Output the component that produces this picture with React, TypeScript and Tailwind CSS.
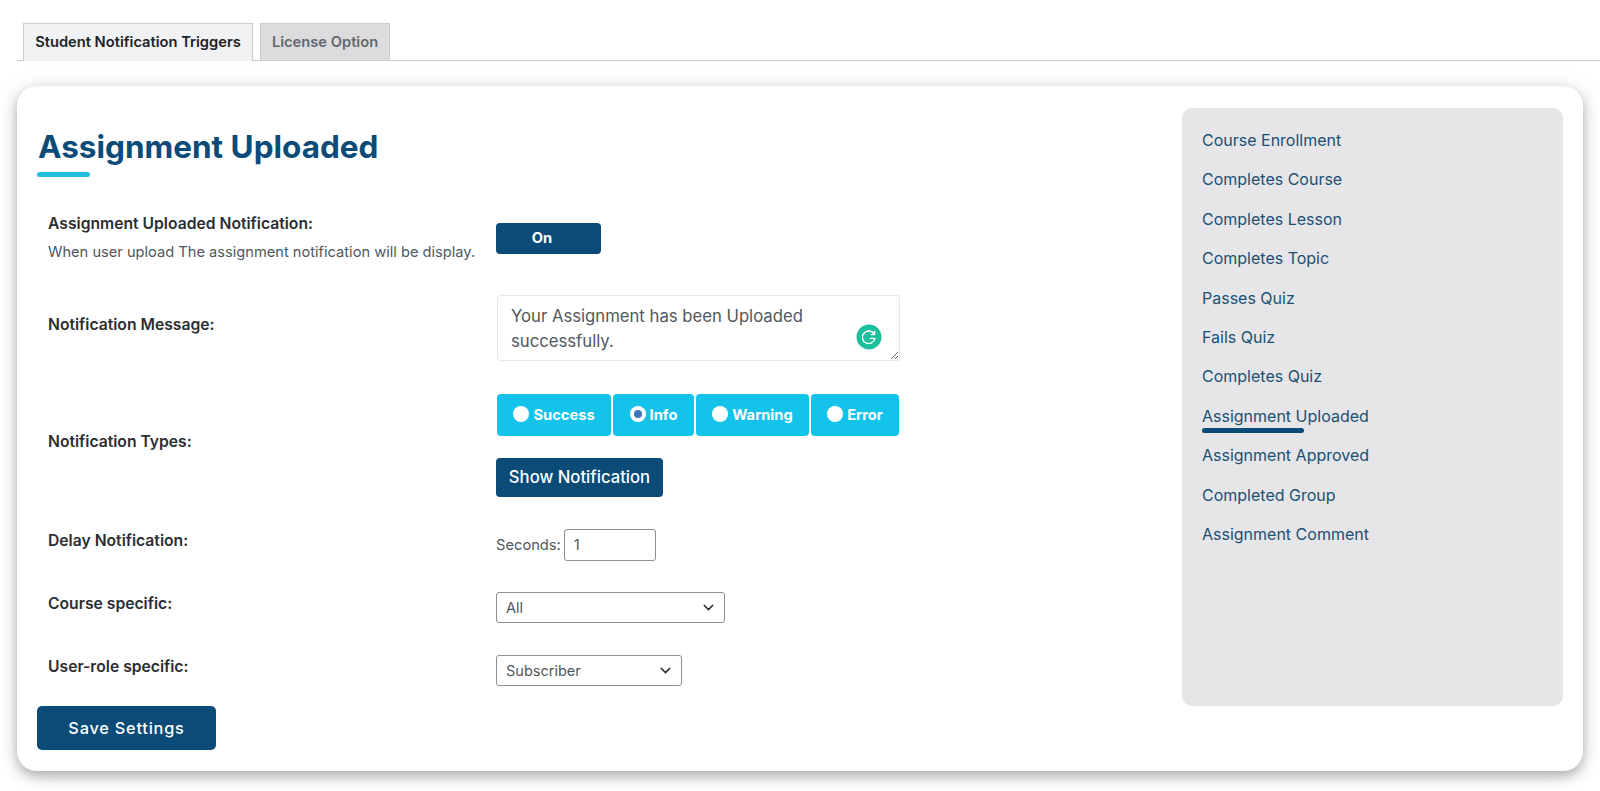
import React from 'react';
import { ChevronDown } from 'lucide-react';

const triggers = [
  'Course Enrollment',
  'Completes Course',
  'Completes Lesson',
  'Completes Topic',
  'Passes Quiz',
  'Fails Quiz',
  'Completes Quiz',
  'Assignment Uploaded',
  'Assignment Approved',
  'Completed Group',
  'Assignment Comment',
];

const types = [
  { name: 'Success', width: 'w-[114px]' },
  { name: 'Info', width: 'w-[81px]', checked: true },
  { name: 'Warning', width: 'w-[113px]' },
  { name: 'Error', width: 'w-[88px]' },
];

const GrammarlyIcon = () => (
  <svg viewBox="0 0 26 26" className="absolute left-[359px] top-[29px] h-[26px] w-[26px]">
    <circle cx="13" cy="13" r="12.5" fill="#1cbf9b" />
    <path
      d="M18.2 10.2a6.3 6.3 0 1 0 .7 4.2h-4.6"
      fill="none"
      stroke="#fff"
      strokeWidth="1.4"
      strokeLinecap="round"
    />
    <path d="M18.6 7.2v3.4h-3.4" fill="none" stroke="#fff" strokeWidth="1.4" strokeLinecap="round" />
  </svg>
);

const Select = ({ value, width }: { value: string; width: string }) => (
  <div className={`relative h-[31px] ${width}`}>
    <select className="h-full w-full appearance-none rounded-[3px] border border-[#8c8f94] bg-white pl-[9px] text-[14.5px] text-[#50575e]">
      <option>{value}</option>
    </select>
    <ChevronDown className="pointer-events-none absolute right-[8px] top-[7px] h-[17px] w-[17px] text-[#2c3338]" />
  </div>
);

const Label = ({ children, top }: { children: React.ReactNode; top: string }) => (
  <div className={`text-[15.7px] font-semibold leading-[20px] text-[#2a2e33] ${top}`}>{children}</div>
);

export default function App() {
  return (
    <div className="h-[791px] overflow-hidden bg-white pt-[23px] font-['Inter',sans-serif]">
      <div className="ml-[17px] flex h-[38px] gap-[7px] border-b border-[#c9ccd1] pl-[6px]">
        <div className="flex h-[38px] w-[230px] items-center justify-center border border-b-0 border-[#c9ccd1] bg-[#f1f2f3] text-[14.7px] font-semibold text-[#1d2327]">
          Student Notification Triggers
        </div>
        <div className="flex h-[37px] w-[130px] items-center justify-center border border-b-0 border-[#c9ccd1] bg-[#dcdcde] text-[14.7px] font-semibold text-[#646970]">
          License Option
        </div>
      </div>

      <div className="ml-[17px] mt-[25px] flex h-[685px] w-[1566px] justify-between rounded-[20px] bg-white pl-[20px] pr-[20px] pt-[22px] shadow-[0_5px_14px_rgba(0,0,0,0.32),0_0_30px_rgba(0,0,0,0.05)]">
        <div className="w-[880px]">
          <h1 className="ml-[1px] mt-[19px] text-[31.5px] font-bold leading-[40px] text-[#0a4b78]">Assignment Uploaded</h1>
          <div className="mt-[5px] h-[5px] w-[53px] rounded-full bg-[#22bfe0]" />

          <div className="mt-[37px] grid grid-cols-[448px_1fr] pl-[11px]">
            <div>
              <Label top="">Assignment Uploaded Notification:</Label>
              <p className="mt-[8px] whitespace-nowrap text-[14.65px] leading-[20px] text-[#50575e]">
                When user upload The assignment notification will be display.
              </p>
            </div>
            <div className="pt-[9px]">
              <div className="h-[31px] w-[105px] rounded-[4px] bg-[#0a4b78] pr-[13px] text-center text-[14.7px] font-bold leading-[30px] text-white">
                On
              </div>
            </div>
          </div>

          <div className="mt-[33px] grid grid-cols-[448px_1fr] pl-[11px]">
            <Label top="pt-[20px]">Notification Message:</Label>
            <div className="relative ml-[1px] w-[403px]">
              <textarea
                readOnly
                value="Your Assignment has been Uploaded successfully."
                className="block h-[66px] w-full rounded-[3px] border border-[#e6e7e9] bg-white px-[13px] py-[8px] text-[16.7px] leading-[25px] text-[#50575e]"
              />
              <GrammarlyIcon />
            </div>
          </div>

          <div className="mt-[33px] grid grid-cols-[448px_1fr] pl-[11px]">
            <Label top="pt-[38px]">Notification Types:</Label>
            <div>
              <div className="ml-[1px] flex w-[403px] gap-[2px]">
                {types.map((type) => (
                  <div
                    key={type.name}
                    className={`flex h-[42px] items-center justify-center gap-[4px] rounded-[4px] bg-[#14c3ea] text-[14.7px] font-bold text-white ${type.width}`}
                  >
                    <span className="mb-[2px] flex h-[16px] w-[16px] items-center justify-center rounded-full bg-white">
                      {type.checked && <span className="h-[8px] w-[8px] rounded-full bg-[#3f74b8]" />}
                    </span>
                    {type.name}
                  </div>
                ))}
              </div>
              <button className="mt-[22px] block h-[39px] w-[167px] rounded-[4px] bg-[#0a4b78] pt-[1px] text-[16.7px] font-medium text-white">
                Show Notification
              </button>
            </div>
          </div>

          <div className="mt-[32px] grid grid-cols-[448px_1fr] pl-[11px]">
            <Label top="pt-[2px]">Delay Notification:</Label>
            <div className="flex items-center gap-[3px] text-[14.7px] text-[#50575e]">
              Seconds:
              <input
                readOnly
                value="1"
                className="h-[32px] w-[92px] rounded-[3px] border border-[#8c8f94] bg-white px-[9px] text-[14.7px] text-[#50575e]"
              />
            </div>
          </div>

          <div className="mt-[31px] grid grid-cols-[448px_1fr] pl-[11px]">
            <Label top="pt-[2px]">Course specific:</Label>
            <Select value="All" width="w-[229px]" />
          </div>

          <div className="mt-[32px] grid grid-cols-[448px_1fr] pl-[11px]">
            <Label top="pt-[2px]">User-role specific:</Label>
            <Select value="Subscriber" width="w-[186px]" />
          </div>

          <button className="mt-[20px] block h-[44px] w-[179px] rounded-[5px] bg-[#0a4b78] text-[16.3px] font-medium tracking-[0.8px] text-white">
            Save Settings
          </button>
        </div>

        <nav className="h-[598px] w-[381px] rounded-[10px] bg-[#e6e6e8] pl-[20px] pt-[22px]">
          {triggers.map((name) => (
            <div key={name} className="relative h-[39.4px] text-[16px] leading-[20px] text-[#1b5074]">
              {name}
              {name === 'Assignment Uploaded' && (
                <span className="absolute left-0 top-[22px] h-[5px] w-[102px] rounded-full bg-[#0a4b78]" />
              )}
            </div>
          ))}
        </nav>
      </div>
    </div>
  );
}
